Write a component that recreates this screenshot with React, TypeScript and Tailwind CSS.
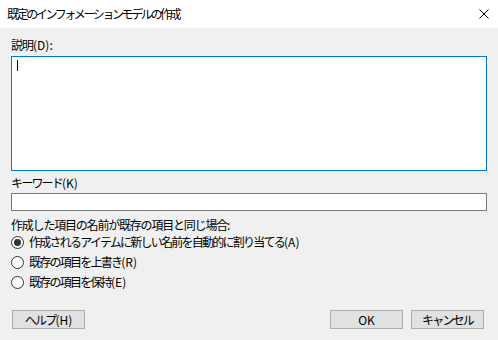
const FONT = "font-['Meiryo_UI','Noto_Sans_CJK_JP',sans-serif]"

// 日本語部分だけ字間を詰め、英字の括弧部分は通常の字間にする
function Label({ jp, en, tight = 'tracking-[-1.6px]' }: { jp: string; en?: string; tight?: string }) {
  return (
    <span className="whitespace-nowrap">
      <span className={tight}>{jp}</span>
      {en && <span className="tracking-normal">{en}</span>}
    </span>
  )
}

function Radio({ checked, jp, en }: { checked?: boolean; jp: string; en: string }) {
  return (
    <div className="flex h-4 items-center gap-[5px]">
      <span className="flex h-[13px] w-[13px] items-center justify-center rounded-full border border-[#333333] bg-white">
        {checked && <span className="h-[7px] w-[7px] rounded-full bg-[#333333]" />}
      </span>
      <Label jp={jp} en={en} tight="tracking-[-1.75px]" />
    </div>
  )
}

function Button({ children, className = '' }: { children: React.ReactNode; className?: string }) {
  return (
    <button
      className={`flex h-[19px] w-[73px] items-center justify-center border border-[#adadad] bg-[#e1e1e1] text-[12px] leading-none text-black ${className}`}
    >
      {children}
    </button>
  )
}

export default function App() {
  return (
    <div className={`flex h-[340px] w-[498px] flex-col bg-[#f0f0f0] text-[12px] leading-4 text-black ${FONT}`}>
      {/* タイトルバー */}
      <div className="flex h-[28px] items-center justify-between bg-white pl-[7px] pr-[9px]">
        <span className="tracking-[-2.4px]">既定のインフォメーションモデルの作成</span>
        <svg width="10" height="10" viewBox="0 0 10 10" stroke="#000" strokeWidth="1">
          <line x1="0.5" y1="0.5" x2="9.5" y2="9.5" />
          <line x1="9.5" y1="0.5" x2="0.5" y2="9.5" />
        </svg>
      </div>

      <div className="flex flex-1 flex-col px-[11px] pt-[9px]">
        <div className="h-4">
          <Label jp="説明" en="(D):" tight="tracking-[-1px]" />
        </div>
        <div className="mt-[3px] h-[115px] border border-[#0078d7] bg-white px-[5px] pt-[3px]">
          <span className="block h-[11px] w-px bg-black" />
        </div>

        <div className="mt-[4px] h-4">
          <Label jp="キーワード" en="(K)" tight="tracking-[-1.8px]" />
        </div>
        <div className="mt-[2px] h-[18px] border border-[#7a7a7a] bg-white" />

        <div className="mt-[6px] h-4 tracking-[-1.2px]">作成した項目の名前が既存の項目と同じ場合:</div>
        <div className="mt-px flex flex-col gap-[4px]">
          <Radio checked jp="作成されるアイテムに新しい名前を自動的に割り当てる" en="(A)" />
          <Radio jp="既存の項目を上書き" en="(R)" />
          <Radio jp="既存の項目を保持" en="(E)" />
        </div>

        <div className="mt-[20px] flex items-center">
          <Button className="ml-px">
            <Label jp="ヘルプ" en="(H)" tight="tracking-[-1.8px]" />
          </Button>
          <div className="flex-1" />
          <Button>OK</Button>
          <Button className="ml-[8px] mr-[3px] tracking-[-1.8px]">キャンセル</Button>
        </div>
      </div>
    </div>
  )
}
